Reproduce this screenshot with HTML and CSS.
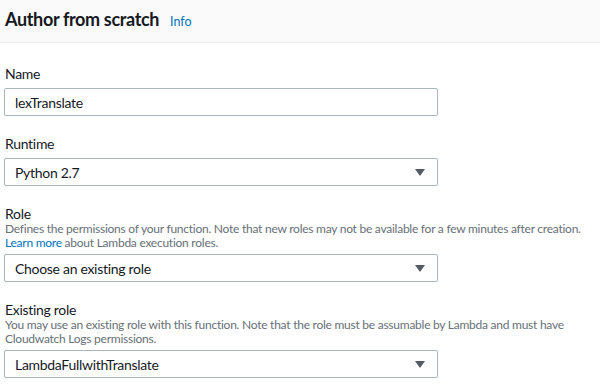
FILE: index.html
```html
<!DOCTYPE html>
<html lang="en">
<head>
    <meta charset="UTF-8">
    <meta name="viewport" content="width=device-width, initial-scale=1.0">
    <title>Author from scratch</title>
    <link rel="stylesheet" href="styles.css">
</head>
<body>
    <div class="panel-header">
        <h2>Author from scratch</h2>
        <a href="#" class="info">Info</a>
    </div>

    <div class="panel-body">
        <div class="field">
            <label class="field-label">Name</label>
            <div class="input">lexTranslate</div>
        </div>

        <div class="field">
            <label class="field-label">Runtime</label>
            <div class="select">
                <span>Python 2.7</span>
                <span class="caret"></span>
            </div>
        </div>

        <div class="field">
            <label class="field-label">Role</label>
            <div class="field-desc">Defines the permissions of your function. Note that new roles may not be available for a few minutes after creation.<br><a href="#">Learn more</a> about Lambda execution roles.</div>
            <div class="select">
                <span>Choose an existing role</span>
                <span class="caret"></span>
            </div>
        </div>

        <div class="field">
            <label class="field-label">Existing role</label>
            <div class="field-desc">You may use an existing role with this function. Note that the role must be assumable by Lambda and must have<br>Cloudwatch Logs permissions.</div>
            <div class="select">
                <span>LambdaFullwithTranslate</span>
                <span class="caret"></span>
            </div>
        </div>
    </div>
</body>
</html>
```

FILE: styles.css
```css
body {
    margin: 0;
    font-family: Lato, Arial, sans-serif;
    color: #16191f;
    background: #fff;
}
a {
    color: #0073bb;
    text-decoration: none;
}
.panel-header {
    display: flex;
    align-items: baseline;
    gap: 11px;
    height: 43px;
    box-sizing: border-box;
    padding: 5px 5px 0;
    background: #fafafa;
    border-bottom: 1px solid #eaeded;
}
.panel-header h2 {
    margin: 0;
    font-size: 18px;
    font-weight: bold;
    line-height: 28px;
    letter-spacing: -0.35px;
}
.info {
    font-size: 12.5px;
}
.panel-body {
    padding: 21px 5px 0 4px;
}
.field {
    margin-bottom: 18px;
}
.field-label {
    display: block;
    font-size: 14px;
    line-height: 20px;
    letter-spacing: -0.3px;
    margin: 0 0 4px 1px;
}
.field-desc {
    font-size: 12px;
    line-height: 14px;
    letter-spacing: -0.25px;
    color: #687078;
    margin: -6px 0 4px 1px;
    white-space: nowrap;
}
.input, .select {
    width: 434px;
    height: 28px;
    box-sizing: border-box;
    border: 1px solid #aab7b8;
    border-radius: 2px;
    padding: 0 10px;
    font-size: 14px;
    letter-spacing: -0.3px;
    display: flex;
    align-items: center;
}
.select {
    justify-content: space-between;
}
.caret {
    width: 0;
    height: 0;
    border-left: 5px solid transparent;
    border-right: 5px solid transparent;
    border-top: 7px solid #545b64;
    margin-right: 2px;
}
```
